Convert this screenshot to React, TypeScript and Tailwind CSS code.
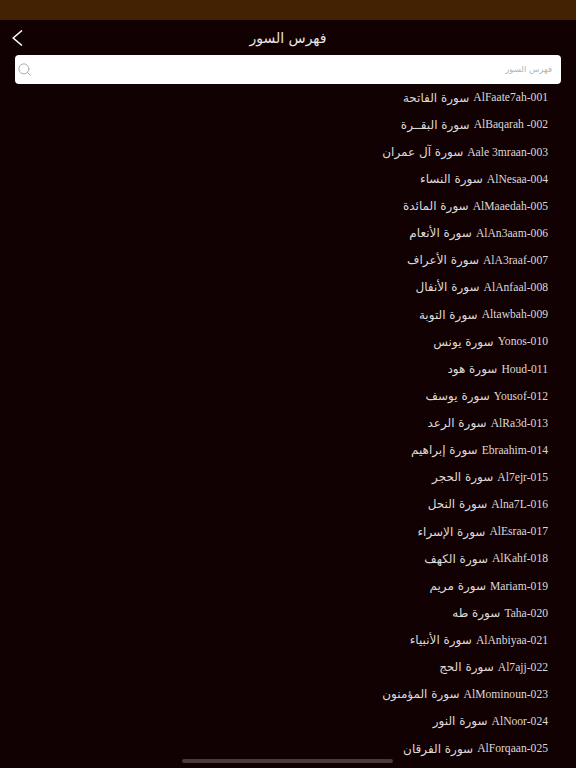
import { Search } from 'lucide-react';

const suras = [
  ['AlFaate7ah-001', 'سورة الفاتحة'],
  ['AlBaqarah -002', 'سورة البقــرة'],
  ['Aale 3mraan-003', 'سورة آل عمران'],
  ['AlNesaa-004', 'سورة النساء'],
  ['AlMaaedah-005', 'سورة المائدة'],
  ['AlAn3aam-006', 'سورة الأنعام'],
  ['AlA3raaf-007', 'سورة الأعراف'],
  ['AlAnfaal-008', 'سورة الأنفال'],
  ['Altawbah-009', 'سورة التوبة'],
  ['Yonos-010', 'سورة يونس'],
  ['Houd-011', 'سورة هود'],
  ['Yousof-012', 'سورة يوسف'],
  ['AlRa3d-013', 'سورة الرعد'],
  ['Ebraahim-014', 'سورة إبراهيم'],
  ['Al7ejr-015', 'سورة الحجر'],
  ['Alna7L-016', 'سورة النحل'],
  ['AlEsraa-017', 'سورة الإسراء'],
  ['AlKahf-018', 'سورة الكهف'],
  ['Mariam-019', 'سورة مريم'],
  ['Taha-020', 'سورة طه'],
  ['AlAnbiyaa-021', 'سورة الأنبياء'],
  ['Al7ajj-022', 'سورة الحج'],
  ['AlMominoun-023', 'سورة المؤمنون'],
  ['AlNoor-024', 'سورة النور'],
  ['AlForqaan-025', 'سورة الفرقان'],
];

export default function App() {
  return (
    <div className="relative h-[768px] w-[576px] overflow-hidden bg-[#120103]">
      <div className="h-[20px] bg-[#432203]" />

      <div className="relative flex h-[35px] items-center justify-center pt-[2px]">
        <svg className="absolute left-[12px] top-[10px] h-[16px] w-[11px]" viewBox="0 0 11 16" fill="none" stroke="white" strokeWidth="1.5">
          <path d="M10 0.5 L1.2 8 L10 15.5" />
        </svg>
        <h1 dir="rtl" className="font-['DejaVu_Sans',sans-serif] text-[14px] text-[#e8e4e2]">فهرس السور</h1>
      </div>

      <div className="mx-[15px] flex h-[29px] items-center justify-between rounded-[4px] bg-white pl-[2px] pr-[9px]">
        <Search className="h-[15px] w-[15px] text-[#adadad]" strokeWidth={1.6} />
        <span dir="rtl" className="font-['DejaVu_Sans',sans-serif] text-[8.5px] text-[#b5b5b5]">فهرس السور</span>
      </div>

      <ul className="pr-[28px]">
        {suras.map(([name, arabic]) => (
          <li key={name} dir="rtl" className="flex h-[27.125px] items-center gap-[4px] text-[#dcd9d8]">
            <span dir="ltr" className="mt-px font-['Liberation_Serif',serif] text-[11.6px]">{name}</span>
            <span className="font-['DejaVu_Sans',sans-serif] text-[12px]">{arabic}</span>
          </li>
        ))}
      </ul>

      <div className="absolute bottom-[5px] left-[182px] h-[4px] w-[211px] rounded-full bg-[#4a3a3c]" />
    </div>
  );
}
